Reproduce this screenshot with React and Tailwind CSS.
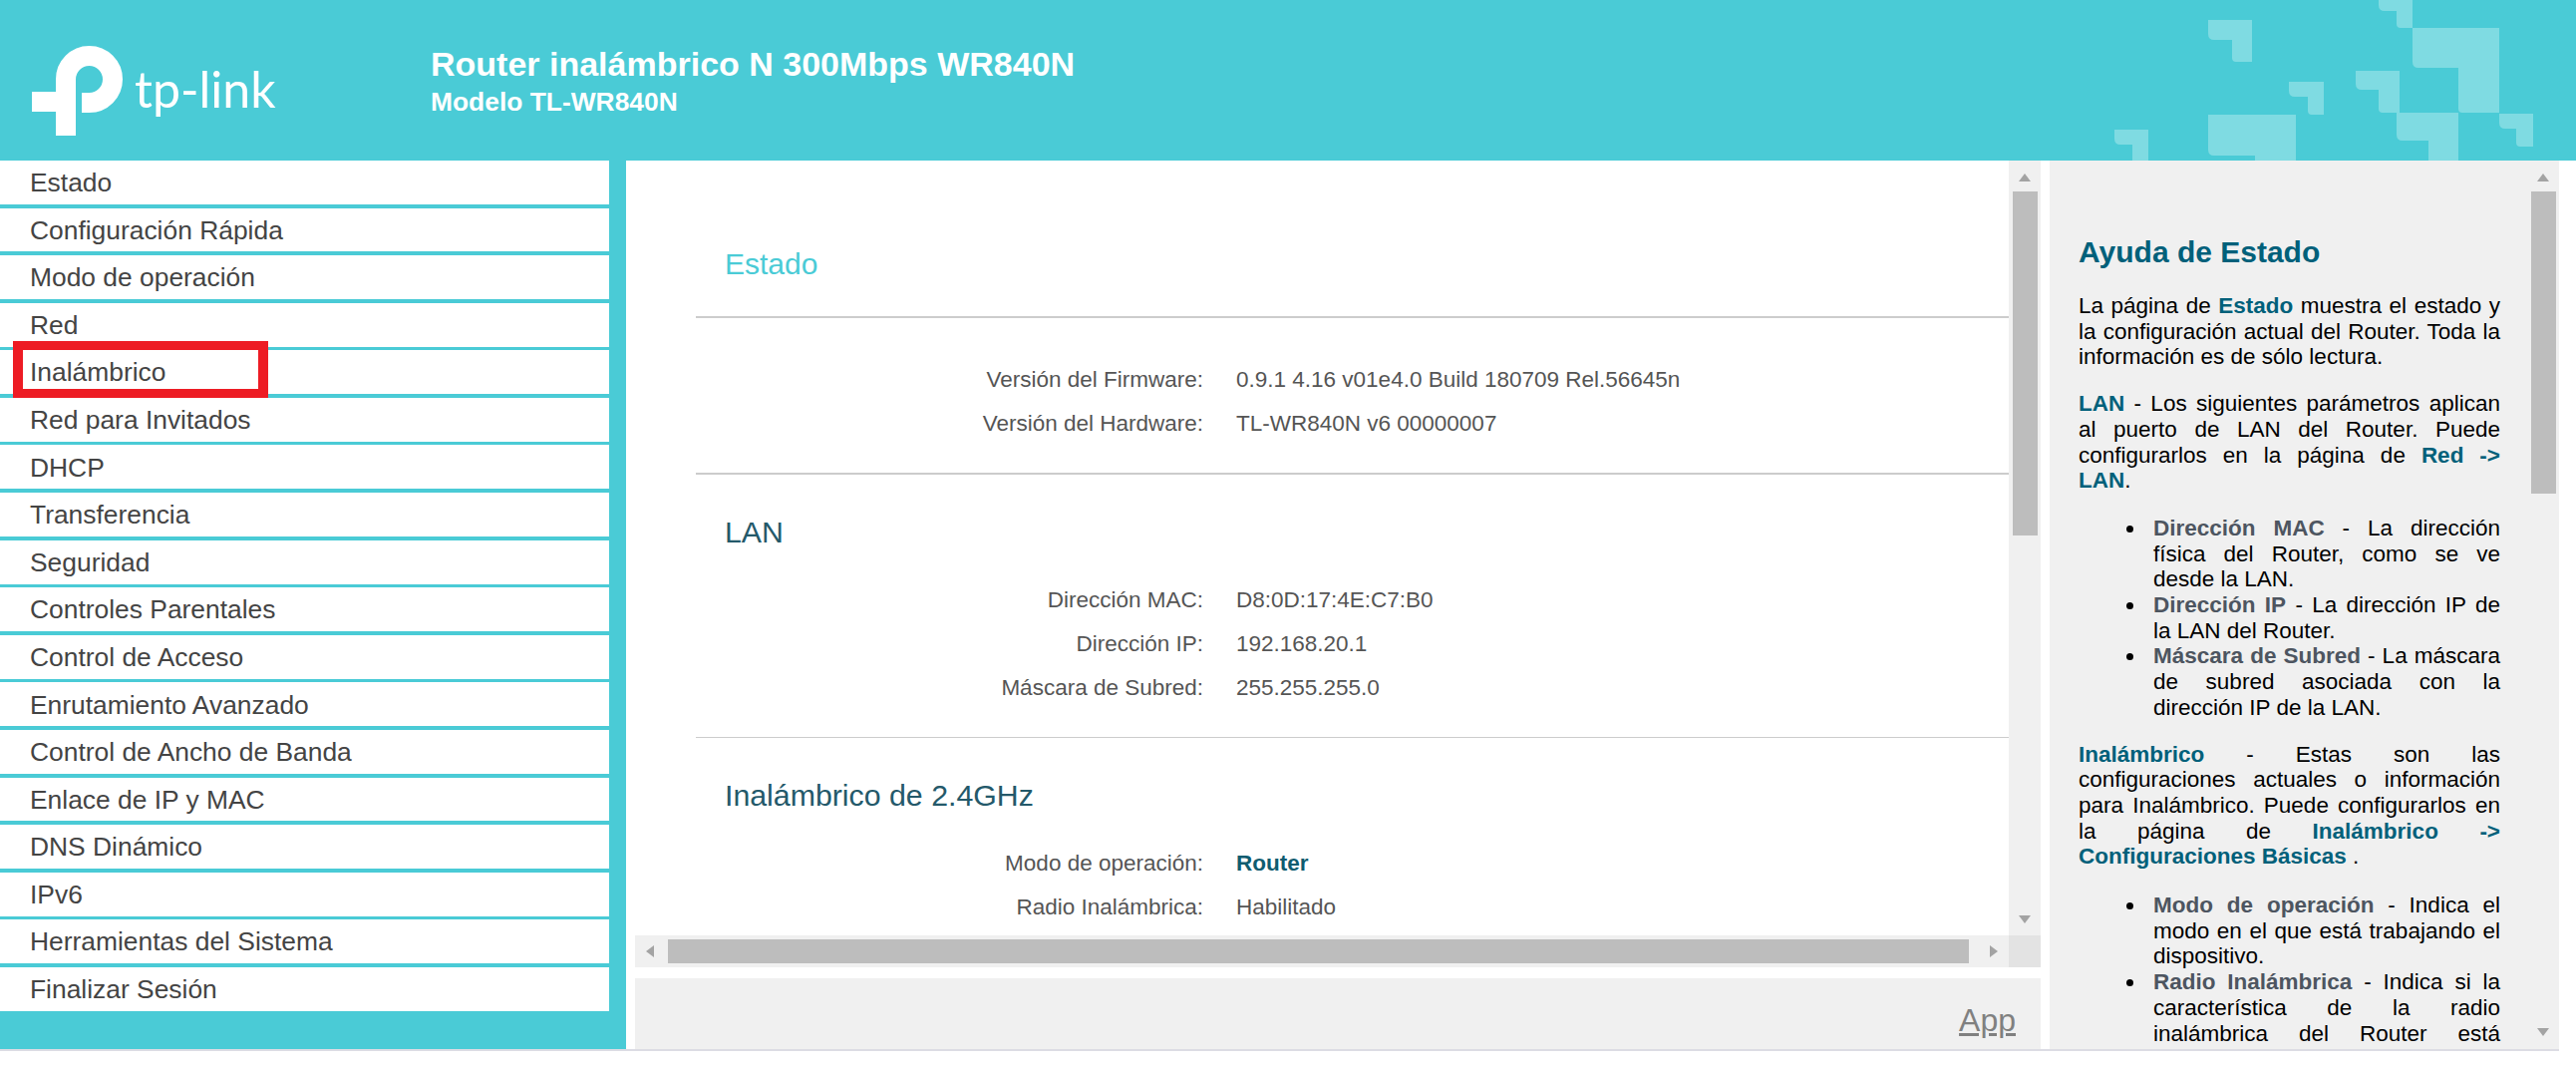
import React from 'react';

const font = { fontFamily: '"Liberation Sans", Arial, sans-serif' };

const menu = [
  'Estado',
  'Configuración Rápida',
  'Modo de operación',
  'Red',
  'Inalámbrico',
  'Red para Invitados',
  'DHCP',
  'Transferencia',
  'Seguridad',
  'Controles Parentales',
  'Control de Acceso',
  'Enrutamiento Avanzado',
  'Control de Ancho de Banda',
  'Enlace de IP y MAC',
  'DNS Dinámico',
  'IPv6',
  'Herramientas del Sistema',
  'Finalizar Sesión',
];

// header tiles: x, y, width, height, bar bottom, leg left
const tiles = [
  [2386, -6, 34, 34, 11, 2404],
  [2215, 20, 44, 42, 40, 2239],
  [2420, 28, 87, 85, 68, 2466],
  [2296, 82, 35, 33, 97, 2315],
  [2363, 71, 44, 42, 90, 2386],
  [2215, 115, 88, 60, 156, 2262],
  [2404, 113, 62, 60, 141, 2436],
  [2507, 114, 34, 33, 129, 2524],
  [2121, 130, 34, 40, 145, 2139],
];

const Logo = () => (
  <svg width="135" height="161" viewBox="0 0 135 161" className="shrink-0" fill="none">
    <path d="M66 136V79.5a23.5 23.5 0 0 1 47 0 23.5 23.5 0 0 1-23.5 23.5H82" stroke="#fff" strokeWidth="20" />
    <rect x="32" y="92" width="44" height="20" fill="#fff" />
  </svg>
);

const Header = () => (
  <header className="relative h-[161px] shrink-0 overflow-hidden bg-[#4acbd6] text-white">
    <svg className="absolute left-0 top-0" width="2584" height="161" fill="#7fdbe2">
      {tiles.map(([x, y, w, h, bar, leg], i) => (
        <path
          key={i}
          d={`M${x} ${y}H${x + w}V${y + h}H${leg + 4}Q${leg} ${y + h} ${leg} ${y + h - 4}V${bar}H${x + 6}Q${x} ${bar} ${x} ${bar - 6}Z`}
        />
      ))}
    </svg>
    <div className="relative flex h-full items-center">
      <div className="flex h-full w-[432px] shrink-0 items-center">
        <Logo />
        <span className="mt-[16px] text-[50px] leading-none" style={{ fontFamily: 'Lato, sans-serif' }}>
          tp-link
        </span>
      </div>
      <div className="pt-[2px]" style={font}>
        <div className="text-[34px] font-bold leading-[40px]">Router inalámbrico N 300Mbps WR840N</div>
        <div className="text-[26.4px] font-bold leading-[36px]">Modelo TL-WR840N</div>
      </div>
    </div>
  </header>
);

const Sidebar = () => (
  <nav className="flex h-full w-[628px] shrink-0 flex-col bg-[#4acbd6]">
    <ul className="flex w-[611px] flex-col gap-[3.7px]">
      {menu.map((item) => (
        <li key={item} className="relative flex h-[43.9px] items-center bg-white pl-[30px] pt-[2px] text-[26.4px] text-[#444444]">
          {item}
          {item === 'Inalámbrico' && (
            <span className="absolute -top-[9px] left-[13px] h-[57px] w-[256px] border-x-[10px] border-y-[9px] border-[#ed1c24]" />
          )}
        </li>
      ))}
    </ul>
  </nav>
);

const Arrow = ({ dir, className }) => {
  const points = {
    up: '0,8 12,8 6,0',
    down: '0,0 12,0 6,8',
    left: '8,0 8,12 0,6',
    right: '0,0 0,12 8,6',
  };
  const vertical = dir === 'up' || dir === 'down';
  return (
    <svg width={vertical ? 12 : 8} height={vertical ? 8 : 12} className={className} fill="#a3a3a3">
      <polygon points={points[dir]} />
    </svg>
  );
};

const VScroll = ({ thumbHeight, children }) => (
  <div className="flex w-[32px] shrink-0 flex-col items-center bg-[#f0f0f0]">
    <Arrow dir="up" className="mt-[13px] mb-[10px] shrink-0" />
    <div className="w-[25px] shrink-0 bg-[#bdbdbd]" style={{ height: thumbHeight }} />
    <div className="flex-1" />
    {children}
  </div>
);

const Row = ({ label, children, bold }) => (
  <div className="flex h-[44px] items-center">
    <div className="w-[509px] shrink-0 text-right text-[#555555]">{label}</div>
    <div className={bold ? 'ml-[33px] font-bold text-[#0f5c70]' : 'ml-[33px] text-[#555555]'}>{children}</div>
  </div>
);

const Content = () => (
  <main className="flex min-w-0 flex-1 flex-col">
    <div className="flex h-[777px] shrink-0 bg-white">
      <div className="min-w-0 flex-1 overflow-hidden pl-[61px] text-[22.5px]">
        <h1 className="pl-[29px] pt-[86px] text-[30px] font-normal leading-[36px] text-[#4acbd6]">Estado</h1>
        <div className="mt-[34px] h-[2px] bg-[#cccccc]" />
        <div className="pt-[40px] pb-[27px]">
          <Row label="Versión del Firmware:">0.9.1 4.16 v01e4.0 Build 180709 Rel.56645n</Row>
          <Row label="Versión del Hardware:">TL-WR840N v6 00000007</Row>
        </div>
        <div className="h-[2px] bg-[#cccccc]" />
        <h2 className="pl-[29px] pt-[40px] text-[30.3px] font-normal leading-[36px] text-[#24596a]">LAN</h2>
        <div className="pt-[28px] pb-[27px]">
          <Row label="Dirección MAC:">D8:0D:17:4E:C7:B0</Row>
          <Row label="Dirección IP:">192.168.20.1</Row>
          <Row label="Máscara de Subred:">255.255.255.0</Row>
        </div>
        <div className="h-px bg-[#cccccc]" />
        <h2 className="pl-[29px] pt-[40px] text-[30.3px] font-normal leading-[36px] text-[#24596a]">Inalámbrico de 2.4GHz</h2>
        <div className="pt-[28px]">
          <Row label="Modo de operación:" bold>Router</Row>
          <Row label="Radio Inalámbrica:">Habilitado</Row>
        </div>
      </div>
      <VScroll thumbHeight={345}>
        <Arrow dir="down" className="mb-[12px] shrink-0" />
      </VScroll>
    </div>
    <div className="flex h-[32px] shrink-0 items-center bg-[#f0f0f0] pl-[11px]">
      <Arrow dir="left" className="shrink-0" />
      <div className="ml-[14px] h-[24px] w-[1305px] shrink-0 bg-[#bdbdbd]" />
      <Arrow dir="right" className="ml-[21px] shrink-0" />
      <div className="flex-1" />
      <div className="h-full w-[32px] bg-[#e3e3e3]" />
    </div>
    <div className="mt-[11px] flex flex-1 items-start justify-end bg-[#f0f0f0] pr-[25px] pt-[21px]">
      <span className="text-[32px] leading-[42px] text-[#808080] underline">App</span>
    </div>
  </main>
);

const Term = ({ children }) => <b className="font-bold text-[#00607a]">{children}</b>;
const Key = ({ children }) => <b className="font-bold text-[#4d5560]">{children}</b>;

const Item = ({ children }) => (
  <li className="relative">
    <span className="absolute -left-[27px] top-[10px] h-[7px] w-[7px] rounded-full bg-black" />
    {children}
  </li>
);

const Help = () => (
  <aside className="ml-[9px] flex w-[511px] shrink-0 bg-[#f0f0f0]">
    <div className="min-w-0 flex-1 overflow-hidden pl-[29px] pr-[27px] text-justify text-[22.5px] leading-[25.7px] text-black">
      <h2 className="pt-[74px] text-left text-[30px] font-bold leading-[36px] text-[#00607a]">Ayuda de Estado</h2>
      <p className="mt-[23px]">
        La página de <Term>Estado</Term> muestra el estado y la configuración actual del Router. Toda la información es de sólo lectura.
      </p>
      <p className="mt-[21px]">
        <Term>LAN</Term> - Los siguientes parámetros aplican al puerto de LAN del Router. Puede configurarlos en la página de <Term>Red -&gt; LAN</Term>.
      </p>
      <ul className="mt-[22px] pl-[75px]">
        <Item>
          <Key>Dirección MAC</Key> - La dirección física del Router, como se ve desde la LAN.
        </Item>
        <Item>
          <Key>Dirección IP</Key> - La dirección IP de la LAN del Router.
        </Item>
        <Item>
          <Key>Máscara de Subred</Key> - La máscara de subred asociada con la dirección IP de la LAN.
        </Item>
      </ul>
      <p className="mt-[21px]">
        <Term>Inalámbrico</Term> - Estas son las configuraciones actuales o información para Inalámbrico. Puede configurarlos en la página de <Term>Inalámbrico -&gt; Configuraciones Básicas</Term> .
      </p>
      <ul className="mt-[23px] pl-[75px]">
        <Item>
          <Key>Modo de operación</Key> - Indica el modo en el que está trabajando el dispositivo.
        </Item>
        <Item>
          <Key>Radio Inalámbrica</Key> - Indica si la característica de la radio inalámbrica del Router está habilitada o no.
        </Item>
      </ul>
    </div>
    <VScroll thumbHeight={303}>
      <Arrow dir="down" className="mb-[13px] shrink-0" />
    </VScroll>
  </aside>
);

export default function App() {
  return (
    <div className="flex h-[1074px] w-[2584px] flex-col overflow-hidden bg-white" style={font}>
      <Header />
      <div className="flex h-[891px] w-[2567px] shrink-0">
        <Sidebar />
        <div className="ml-[9px] flex min-w-0 flex-1">
          <Content />
          <Help />
        </div>
      </div>
      <div className="h-[2px] w-[2567px] shrink-0 bg-[#dcdce4]" />
    </div>
  );
}
